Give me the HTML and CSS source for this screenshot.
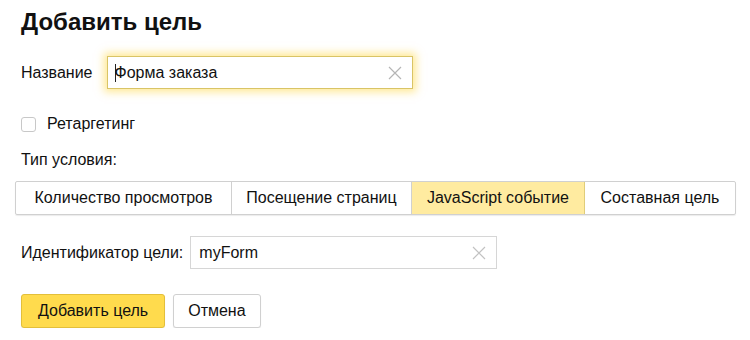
FILE: index.html
```html
<!DOCTYPE html>
<html lang="ru">
<head>
    <meta charset="UTF-8">
    <title>Добавить цель</title>
    <link rel="stylesheet" href="styles.css">
</head>
<body>
    <div class="goal-form">
        <h1 class="title">Добавить цель</h1>

        <div class="row name-row">
            <label class="label">Название</label>
            <div class="input input-focused">
                <span class="caret"></span>
                <span class="input-text">Форма заказа</span>
                <span class="clear">
                    <svg width="14" height="14" viewBox="0 0 14 14"><path d="M1 1L13 13M13 1L1 13" stroke="#b5b5b5" stroke-width="1.2" fill="none"/></svg>
                </span>
            </div>
        </div>

        <label class="check-row">
            <span class="checkbox"></span>
            <span>Ретаргетинг</span>
        </label>

        <div class="section-label">Тип условия:</div>

        <div class="radio-group">
            <div class="radio">Количество просмотров</div>
            <div class="radio">Посещение страниц</div>
            <div class="radio radio-checked">JavaScript событие</div>
            <div class="radio">Составная цель</div>
        </div>

        <div class="row id-row">
            <label class="label">Идентификатор цели:</label>
            <div class="input input-id">
                <span class="input-text">myForm</span>
                <span class="clear">
                    <svg width="14" height="14" viewBox="0 0 14 14"><path d="M1 1L13 13M13 1L1 13" stroke="#c2c2c2" stroke-width="1.2" fill="none"/></svg>
                </span>
            </div>
        </div>

        <div class="actions">
            <button class="btn btn-action">Добавить цель</button>
            <button class="btn">Отмена</button>
        </div>
    </div>
</body>
</html>
```

FILE: styles.css
```css
body {
    margin: 0;
    background: #fff;
    color: #111;
    font-family: 'Liberation Sans', Arial, sans-serif;
    font-size: 16px;
}
.goal-form {
    padding: 6px 0 0 21px;
}
.title {
    margin: 0;
    font-size: 24px;
    font-weight: bold;
    line-height: 32px;
    color: #111;
}
.row {
    display: flex;
    align-items: center;
}
.name-row {
    margin-top: 18px;
}
.label {
    margin-right: 14px;
}
.input {
    display: flex;
    align-items: center;
    box-sizing: border-box;
    height: 33px;
    border: 1px solid #d6d6d6;
    padding: 0 10px 0 7px;
    background: #fff;
}
.input-focused {
    width: 306px;
    border-color: #d9c466;
    box-shadow: 0 0 8px 3px rgba(255, 212, 45, 0.5);
}
.caret {
    width: 1px;
    height: 18px;
    background: #222;
    margin-right: -1px;
}
.input-text {
    flex: 1;
}
.clear {
    display: flex;
}
.check-row {
    display: flex;
    align-items: center;
    margin-top: 26px;
}
.checkbox {
    box-sizing: border-box;
    width: 15px;
    height: 15px;
    border: 1px solid #c8c8c8;
    border-radius: 3px;
    margin-right: 11px;
}
.section-label {
    margin-top: 17px;
    line-height: 20px;
}
.radio-group {
    display: flex;
    margin: 11px 0 0 -6px;
    width: 721px;
    height: 34px;
    box-sizing: border-box;
    border: 1px solid #d0d0d0;
    border-radius: 2px;
    box-shadow: 0 1px 1px rgba(0, 0, 0, 0.08);
}
.radio {
    display: flex;
    align-items: center;
    justify-content: center;
    flex: 0 0 auto;
    box-sizing: border-box;
    border-right: 1px solid #d0d0d0;
    white-space: nowrap;
}
.radio:first-child {
    width: 216px;
}
.radio:nth-child(2) {
    width: 180px;
}
.radio:nth-child(3) {
    width: 173px;
}
.radio:last-child {
    flex: 1;
    border-right: none;
}
.radio-checked {
    background: #ffeba0;
    border-color: #e0cd7a;
}
.id-row {
    margin-top: 21px;
}
.id-row .label {
    margin-right: 7px;
}
.input-id {
    width: 307px;
    padding-left: 8px;
}
.actions {
    display: flex;
    gap: 8px;
    margin-top: 25px;
}
.btn {
    height: 34px;
    box-sizing: border-box;
    padding: 0 14px;
    border: 1px solid #d0d0d0;
    border-radius: 3px;
    background: #fff;
    font-family: inherit;
    font-size: 16px;
    color: #111;
    white-space: nowrap;
    box-shadow: 0 1px 1px rgba(0, 0, 0, 0.08);
}
.btn-action {
    padding: 0 16px;
    background: #ffdb4d;
    border-color: #e3bf3a;
}
```
